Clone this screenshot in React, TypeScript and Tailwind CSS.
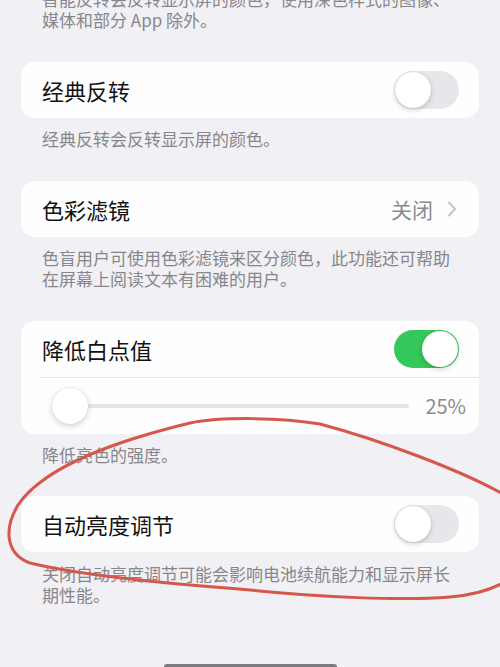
import React from "react";

const font = { fontFamily: '"Noto Sans CJK SC", "Noto Sans", sans-serif' };

function Toggle({ on }: { on: boolean }) {
  return (
    <div
      className={`relative w-[65px] h-[38px] rounded-full flex items-center p-[1px] ${
        on ? "bg-[#34c759] justify-end" : "bg-[#e7e7eb] justify-start"
      }`}
    >
      <div className="w-[36px] h-[36px] rounded-full bg-white shadow-[0_2px_5px_rgba(0,0,0,0.18),0_0_1px_rgba(0,0,0,0.15)]" />
    </div>
  );
}

function Row({ children }: { children: React.ReactNode }) {
  return (
    <div className="h-[56px] flex items-center justify-between pl-[21px] pr-[20px]">
      {children}
    </div>
  );
}

function Title({ children }: { children: React.ReactNode }) {
  return <span className="text-[22px] leading-none text-[#111111]">{children}</span>;
}

function Note({ children, mb = "mb-[32px]" }: { children: React.ReactNode; mb?: string }) {
  return (
    <div className={`px-[42px] pt-[10px] ${mb} text-[17px] leading-[21px] text-[#87878b]`}>
      {children}
    </div>
  );
}

export default function App() {
  return (
    <div
      className="relative w-[500px] h-[667px] overflow-hidden bg-[#f1f0f5]"
      style={font}
    >
      <div className="mt-[-12px]">
        <div className="px-[42px] mb-[32px] text-[17px] leading-[21px] text-[#87878b] whitespace-nowrap">
          <div>智能反转会反转显示屏的颜色，使用深色样式的图像、</div>
          <div>媒体和部分 App 除外。</div>
        </div>

        <div className="mx-[21px] bg-[#fefefe] rounded-[14px]">
          <Row>
            <Title>经典反转</Title>
            <Toggle on={false} />
          </Row>
        </div>
        <Note>经典反转会反转显示屏的颜色。</Note>

        <div className="mx-[21px] bg-[#fefefe] rounded-[14px]">
          <Row>
            <Title>色彩滤镜</Title>
            <div className="flex items-center gap-[14px] pr-[2px]">
              <span className="text-[21px] leading-none text-[#8a8a8e]">关闭</span>
              <svg width="10" height="16" viewBox="0 0 10 16" fill="none">
                <path d="M2 1.5 L8 8 L2 14.5" stroke="#c4c4c8" strokeWidth="2" strokeLinecap="round" strokeLinejoin="round" />
              </svg>
            </div>
          </Row>
        </div>
        <Note>
          <div>色盲用户可使用色彩滤镜来区分颜色，此功能还可帮助</div>
          <div>在屏幕上阅读文本有困难的用户。</div>
        </Note>

        <div className="mx-[21px] bg-[#fefefe] rounded-[14px]">
          <Row>
            <Title>降低白点值</Title>
            <Toggle on={true} />
          </Row>
          <div className="ml-[20px] h-[1px] bg-[#e6e6ea]" />
          <div className="h-[56px] flex items-center pl-[31px] pr-[13px]">
            <div className="relative flex-1 flex items-center">
              <div className="w-[36px] h-[36px] rounded-full bg-white shadow-[0_2px_6px_rgba(0,0,0,0.18),0_0_1px_rgba(0,0,0,0.15)] shrink-0 z-10" />
              <div className="flex-1 h-[4px] rounded-full bg-[#e4e4e9]" />
            </div>
            <span className="ml-[16px] text-[20px] leading-none text-[#8a8a8e]">25%</span>
          </div>
        </div>
        <Note mb="mb-[31px]">降低亮色的强度。</Note>

        <div className="mx-[21px] bg-[#fefefe] rounded-[14px]">
          <Row>
            <Title>自动亮度调节</Title>
            <Toggle on={false} />
          </Row>
        </div>
        <Note>
          <div className="pt-[1px]">关闭自动亮度调节可能会影响电池续航能力和显示屏长</div>
          <div>期性能。</div>
        </Note>
      </div>

      <svg
        className="absolute left-0 top-0 pointer-events-none"
        width="500"
        height="667"
        viewBox="0 0 500 667"
        fill="none"
      >
        <path
          d="M 503 494 C 460 470, 380 440, 320 424 C 280 417, 220 417, 190 423 C 120 440, 45 465, 18 505 C 2 532, 8 555, 30 563 C 80 575, 150 582, 250 590 C 320 597, 400 601, 450 597 C 475 595, 490 590, 503 583"
          stroke="#d6574b"
          strokeWidth="3"
          strokeLinecap="round"
          strokeLinejoin="round"
        />
      </svg>

      <div className="absolute left-[164px] top-[664px] w-[173px] h-[6px] rounded-full bg-[#7b7b7e]" />
    </div>
  );
}
